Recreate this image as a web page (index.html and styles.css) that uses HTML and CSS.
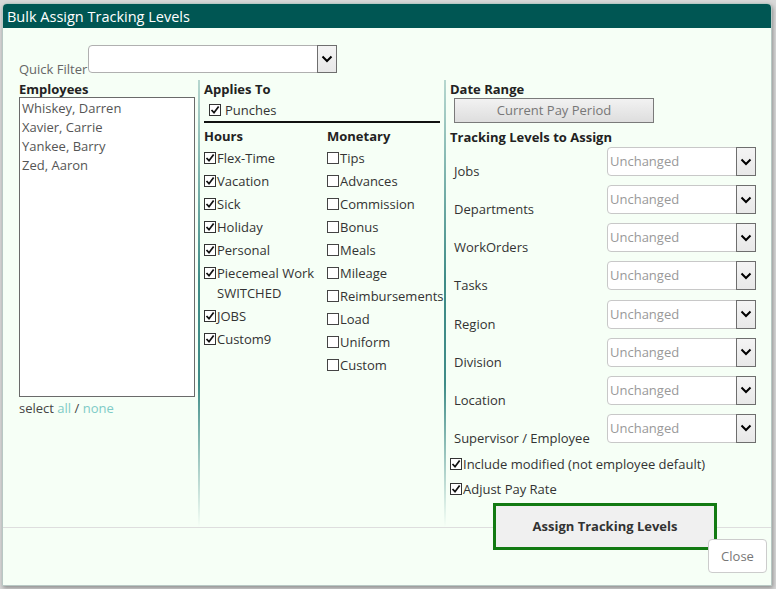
FILE: index.html
```html
<!DOCTYPE html>
<html>
<head>
<meta charset="utf-8">
<link rel="stylesheet" href="styles.css">
</head>
<body>
<div class="dialog">
  <div class="titlebar">Bulk Assign Tracking Levels</div>
  <div class="filter-row">
    <span class="filter-label">Quick Filter</span>
    <div class="select wide"><span class="sel-text"></span><span class="sel-btn"><svg width="12" height="8" viewBox="0 0 12 8"><path d="M1.5 1.5 L6 6 L10.5 1.5" fill="none" stroke="#000" stroke-width="2"/></svg></span></div>
  </div>
  <div class="main">
    <div class="col col1">
      <div class="head">Employees</div>
      <div class="listbox">
        <div class="item">Whiskey, Darren</div>
        <div class="item">Xavier, Carrie</div>
        <div class="item">Yankee, Barry</div>
        <div class="item">Zed, Aaron</div>
      </div>
      <div class="select-links">select <span class="lnk">all</span> / <span class="lnk">none</span></div>
    </div>
    <div class="divider"></div>
    <div class="col col2">
      <div class="head">Applies To</div>
      <div class="punches"><span class="cb on"><svg viewBox="0 0 12 12"><path d="M1.8 6 L4.8 9.2 L10.4 1.8" fill="none" stroke="#111" stroke-width="2.1"/></svg></span>Punches</div>
      <div class="rule"></div>
      <div class="twocol">
        <div class="sub hours">
          <div class="head">Hours</div>
          <div class="chk"><span class="cb on"><svg viewBox="0 0 12 12"><path d="M1.8 6 L4.8 9.2 L10.4 1.8" fill="none" stroke="#111" stroke-width="2.1"/></svg></span><span class="lbl">Flex-Time</span></div>
          <div class="chk"><span class="cb on"><svg viewBox="0 0 12 12"><path d="M1.8 6 L4.8 9.2 L10.4 1.8" fill="none" stroke="#111" stroke-width="2.1"/></svg></span><span class="lbl">Vacation</span></div>
          <div class="chk"><span class="cb on"><svg viewBox="0 0 12 12"><path d="M1.8 6 L4.8 9.2 L10.4 1.8" fill="none" stroke="#111" stroke-width="2.1"/></svg></span><span class="lbl">Sick</span></div>
          <div class="chk"><span class="cb on"><svg viewBox="0 0 12 12"><path d="M1.8 6 L4.8 9.2 L10.4 1.8" fill="none" stroke="#111" stroke-width="2.1"/></svg></span><span class="lbl">Holiday</span></div>
          <div class="chk"><span class="cb on"><svg viewBox="0 0 12 12"><path d="M1.8 6 L4.8 9.2 L10.4 1.8" fill="none" stroke="#111" stroke-width="2.1"/></svg></span><span class="lbl">Personal</span></div>
          <div class="chk"><span class="cb on"><svg viewBox="0 0 12 12"><path d="M1.8 6 L4.8 9.2 L10.4 1.8" fill="none" stroke="#111" stroke-width="2.1"/></svg></span><span class="lbl">Piecemeal Work SWITCHED</span></div>
          <div class="chk"><span class="cb on"><svg viewBox="0 0 12 12"><path d="M1.8 6 L4.8 9.2 L10.4 1.8" fill="none" stroke="#111" stroke-width="2.1"/></svg></span><span class="lbl">JOBS</span></div>
          <div class="chk"><span class="cb on"><svg viewBox="0 0 12 12"><path d="M1.8 6 L4.8 9.2 L10.4 1.8" fill="none" stroke="#111" stroke-width="2.1"/></svg></span><span class="lbl">Custom9</span></div>
        </div>
        <div class="sub monetary">
          <div class="head">Monetary</div>
          <div class="chk"><span class="cb"></span><span class="lbl">Tips</span></div>
          <div class="chk"><span class="cb"></span><span class="lbl">Advances</span></div>
          <div class="chk"><span class="cb"></span><span class="lbl">Commission</span></div>
          <div class="chk"><span class="cb"></span><span class="lbl">Bonus</span></div>
          <div class="chk"><span class="cb"></span><span class="lbl">Meals</span></div>
          <div class="chk"><span class="cb"></span><span class="lbl">Mileage</span></div>
          <div class="chk"><span class="cb"></span><span class="lbl">Reimbursements</span></div>
          <div class="chk"><span class="cb"></span><span class="lbl">Load</span></div>
          <div class="chk"><span class="cb"></span><span class="lbl">Uniform</span></div>
          <div class="chk"><span class="cb"></span><span class="lbl">Custom</span></div>
        </div>
      </div>
    </div>
    <div class="divider"></div>
    <div class="col col3">
      <div class="head">Date Range</div>
      <div class="date-btn">Current Pay Period</div>
      <div class="head tl-head">Tracking Levels to Assign</div>
      <div class="tl-list">
        <div class="tl-row"><span class="tl-label">Jobs</span><div class="select"><span class="sel-text">Unchanged</span><span class="sel-btn"><svg width="12" height="8" viewBox="0 0 12 8"><path d="M1.5 1.5 L6 6 L10.5 1.5" fill="none" stroke="#000" stroke-width="2"/></svg></span></div></div>
        <div class="tl-row"><span class="tl-label">Departments</span><div class="select"><span class="sel-text">Unchanged</span><span class="sel-btn"><svg width="12" height="8" viewBox="0 0 12 8"><path d="M1.5 1.5 L6 6 L10.5 1.5" fill="none" stroke="#000" stroke-width="2"/></svg></span></div></div>
        <div class="tl-row"><span class="tl-label">WorkOrders</span><div class="select"><span class="sel-text">Unchanged</span><span class="sel-btn"><svg width="12" height="8" viewBox="0 0 12 8"><path d="M1.5 1.5 L6 6 L10.5 1.5" fill="none" stroke="#000" stroke-width="2"/></svg></span></div></div>
        <div class="tl-row"><span class="tl-label">Tasks</span><div class="select"><span class="sel-text">Unchanged</span><span class="sel-btn"><svg width="12" height="8" viewBox="0 0 12 8"><path d="M1.5 1.5 L6 6 L10.5 1.5" fill="none" stroke="#000" stroke-width="2"/></svg></span></div></div>
        <div class="tl-row"><span class="tl-label">Region</span><div class="select"><span class="sel-text">Unchanged</span><span class="sel-btn"><svg width="12" height="8" viewBox="0 0 12 8"><path d="M1.5 1.5 L6 6 L10.5 1.5" fill="none" stroke="#000" stroke-width="2"/></svg></span></div></div>
        <div class="tl-row"><span class="tl-label">Division</span><div class="select"><span class="sel-text">Unchanged</span><span class="sel-btn"><svg width="12" height="8" viewBox="0 0 12 8"><path d="M1.5 1.5 L6 6 L10.5 1.5" fill="none" stroke="#000" stroke-width="2"/></svg></span></div></div>
        <div class="tl-row"><span class="tl-label">Location</span><div class="select"><span class="sel-text">Unchanged</span><span class="sel-btn"><svg width="12" height="8" viewBox="0 0 12 8"><path d="M1.5 1.5 L6 6 L10.5 1.5" fill="none" stroke="#000" stroke-width="2"/></svg></span></div></div>
        <div class="tl-row"><span class="tl-label">Supervisor / Employee</span><div class="select"><span class="sel-text">Unchanged</span><span class="sel-btn"><svg width="12" height="8" viewBox="0 0 12 8"><path d="M1.5 1.5 L6 6 L10.5 1.5" fill="none" stroke="#000" stroke-width="2"/></svg></span></div></div>
      </div>
      <div class="chk opt first"><span class="cb on"><svg viewBox="0 0 12 12"><path d="M1.8 6 L4.8 9.2 L10.4 1.8" fill="none" stroke="#111" stroke-width="2.1"/></svg></span><span class="lbl">Include modified (not employee default)</span></div>
      <div class="chk opt"><span class="cb on"><svg viewBox="0 0 12 12"><path d="M1.8 6 L4.8 9.2 L10.4 1.8" fill="none" stroke="#111" stroke-width="2.1"/></svg></span><span class="lbl">Adjust Pay Rate</span></div>
      <div class="assign-btn">Assign Tracking Levels</div>
    </div>
  </div>
  <div class="footer">
    <div class="close-btn">Close</div>
  </div>
</div>
</body>
</html>
```

FILE: styles.css
```css
* { box-sizing: border-box; }
html, body {
  margin: 0;
  padding: 0;
  width: 776px;
  height: 589px;
  overflow: hidden;
}
body {
  background: #d8d8d8;
  font-family: "Open Sans", "Noto Sans", sans-serif;
  font-size: 13px;
  color: #333;
  position: relative;
}
.dialog {
  position: absolute;
  left: 2px;
  top: 3px;
  width: 770px;
  height: 583px;
  background: #f6fff6;
  border: 1px solid #b8c8c4;
  border-radius: 5px 5px 0 0;
  box-shadow: 1px 2px 4px rgba(0,0,0,0.35);
  display: flex;
  flex-direction: column;
}
.titlebar {
  height: 24px;
  background: #005653;
  color: #fff;
  font-size: 14.5px;
  line-height: 25px;
  padding-left: 4px;
  border-radius: 4px 4px 0 0;
  flex: none;
}
.filter-row {
  display: flex;
  align-items: flex-start;
  padding: 17px 0 0 16px;
  height: 52px;
  flex: none;
}
.filter-label {
  color: #666;
  margin-right: 1px;
  line-height: 16px;
  margin-top: 16px;
}
.select {
  position: relative;
  width: 149px;
  height: 29px;
  background: #fff;
  border: 1px solid #c8c8c8;
  border-radius: 4px;
  display: flex;
  align-items: center;
  flex: none;
}
.select.wide {
  width: 249px;
  height: 28px;
  border-color: #b0b0b0;
}
.select.wide .sel-btn { height: 28px; }
.sel-text {
  flex: 1;
  color: #999;
  padding-left: 2px;
  padding-bottom: 1px;
}
.sel-btn {
  width: 20px;
  height: 29px;
  margin: -1px -1px -1px 0;
  background: linear-gradient(#f4f4f4, #e8e8e8);
  border: 1px solid #6e6e6e;
  display: flex;
  align-items: center;
  justify-content: center;
}
.main {
  display: flex;
  height: 448px;
  padding-left: 16px;
  flex: none;
  border-bottom: 1px solid #dedede;
}
.col { flex: none; padding-top: 1px; }
.col1 { width: 176px; }
.col2 { width: 237px; }
.col3 { width: 320px; }
.divider {
  width: 2px;
  margin: 0 4px 0 3px;
  background: linear-gradient(rgba(63,140,135,0.35) 0%, #3f8c87 45%, #3f8c87 68%, rgba(63,140,135,0) 100%);
  flex: none;
}
.head {
  font-weight: 700;
  color: #222;
  line-height: 16px;
  height: 16px;
}
.col1 .listbox {
  width: 176px;
  height: 300px;
  background: #fff;
  border: 1px solid #6a6a6a;
  padding-top: 1px;
}
.item {
  color: #555;
  line-height: 19px;
  padding-left: 2px;
}
.select-links {
  color: #444;
  margin-top: 2px;
  line-height: 18px;
}
.lnk { color: #7ecbc6; }
.punches {
  display: flex;
  align-items: center;
  padding-left: 5px;
  margin-top: 4px;
  line-height: 18px;
}
.punches .cb { margin-top: 0; margin-right: 4px; }
.rule {
  height: 2px;
  background: #111;
  margin-top: 2px;
  width: 236px;
}
.twocol {
  display: flex;
  margin-top: 5px;
}
.hours { width: 123px; }
.monetary { width: 114px; }
.sub .head { margin-bottom: 4px; }
.chk {
  display: flex;
  align-items: flex-start;
  line-height: 20px;
  margin-bottom: 3px;
}
.monetary .chk { white-space: nowrap; }
.cb {
  flex: none;
  width: 12px;
  height: 12px;
  border: 1px solid #333;
  background: #fff;
  margin-top: 4px;
  margin-right: 1px;
  display: flex;
  align-items: center;
  justify-content: center;
}
.cb svg { width: 10px; height: 10px; display: block; }
.monetary .cb { border-color: #444; }
.date-btn {
  margin-left: 4px;
  margin-top: 1px;
  width: 200px;
  height: 25px;
  border: 1px solid #7a7a7a;
  background: linear-gradient(#f2f2f2, #dedede);
  color: #777;
  text-align: center;
  line-height: 23px;
}
.tl-head { margin-top: 6px; }
.tl-list { margin-top: 2px; }
.tl-row {
  display: flex;
  align-items: flex-start;
  height: 38.15px;
  padding-left: 4px;
}
.tl-label {
  width: 153px;
  flex: none;
  line-height: 16px;
  margin-top: 16px;
}
.opt { margin-bottom: 5px; line-height: 20px; }
.opt.first { margin-top: 2px; }
.assign-btn {
  margin-left: 43px;
  margin-top: -1px;
  width: 224px;
  height: 47px;
  border: 3px solid #127a12;
  background: #f0f0f0;
  font-weight: 700;
  color: #333;
  text-align: center;
  line-height: 41px;
  position: relative;
  z-index: 1;
}
.footer {
  flex: 1;
  position: relative;
}
.close-btn {
  position: absolute;
  right: 4px;
  top: 11px;
  width: 59px;
  height: 34px;
  background: #fff;
  border: 1px solid #ccc;
  border-radius: 4px;
  color: #777;
  text-align: center;
  line-height: 32px;
  z-index: 2;
}
```
